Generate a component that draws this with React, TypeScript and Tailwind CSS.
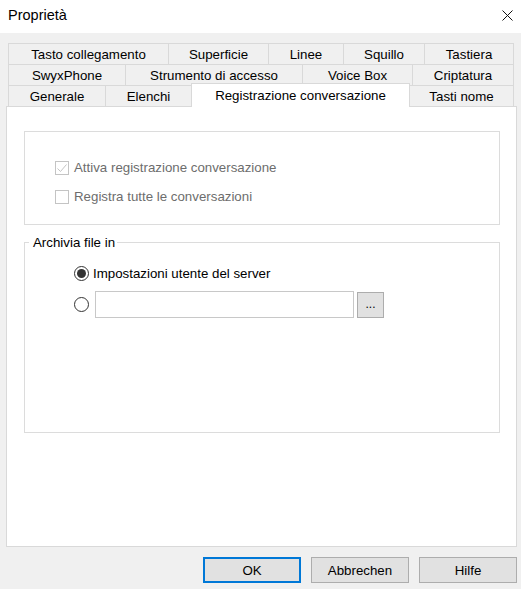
import React from "react";

type TabItem = { label: string; w: string; selected?: boolean };

const rows: TabItem[][] = [
  [
    { label: "Tasto collegamento", w: "w-[161px]" },
    { label: "Superficie", w: "w-[101px]" },
    { label: "Linee", w: "w-[76px]" },
    { label: "Squillo", w: "w-[82px]" },
    { label: "Tastiera", w: "w-[90px]" },
  ],
  [
    { label: "SwyxPhone", w: "w-[118px]" },
    { label: "Strumento di accesso", w: "w-[178px]" },
    { label: "Voice Box", w: "w-[111px]" },
    { label: "Criptatura", w: "w-[102px]" },
  ],
  [
    { label: "Generale", w: "w-[98px]" },
    { label: "Elenchi", w: "w-[87px]" },
    { label: "Registrazione conversazione", w: "w-[219px]", selected: true },
    { label: "Tasti nome", w: "w-[105px]" },
  ],
];

const Tab = ({ tab, first }: { tab: TabItem; first: boolean }) => {
  if (tab.selected)
    return (
      <div
        className={`${tab.w} -ml-px flex h-[24px] items-center justify-center border border-b-0 border-[#d9d9d9] bg-white pb-[1px]`}
      >
        {tab.label}
      </div>
    );
  return (
    <div
      className={`${tab.w} ${first ? "" : "-ml-px"} flex h-[22px] items-center justify-center border border-[#d9d9d9] bg-[#f0f0f0]`}
    >
      {tab.label}
    </div>
  );
};

const Checkbox = ({ checked, label }: { checked?: boolean; label: string }) => (
  <div className="flex h-[15px] items-center">
    <div className="flex h-[14px] w-[14px] items-center justify-center border border-[#c4c4c4] bg-white">
      {checked && (
        <svg width="12" height="12" viewBox="0 0 12 12">
          <path d="M1.5 6.5 L4.5 9.5 L10.5 2.5" fill="none" stroke="#c4c4c4" strokeWidth="1" />
        </svg>
      )}
    </div>
    <span className="ml-[5px] text-[#6d6d6d]">{label}</span>
  </div>
);

const Radio = ({ checked }: { checked?: boolean }) => (
  <div className="flex h-[15px] w-[15px] shrink-0 items-center justify-center rounded-full border border-[#333333] bg-white">
    {checked && <div className="h-[9px] w-[9px] rounded-full bg-[#333333]" />}
  </div>
);

const DialogButton = ({ label, focused }: { label: string; focused?: boolean }) => (
  <button
    className={`flex h-[26px] w-[98px] items-center justify-center bg-[#e1e1e1] ${
      focused ? "border-2 border-[#0078d7]" : "border border-[#adadad]"
    }`}
  >
    {label}
  </button>
);

export default function App() {
  return (
    <div className="flex h-[589px] w-[521px] flex-col bg-[#f0f0f0] font-['Liberation_Sans',Arial,sans-serif] text-[13.3px] leading-[15px] text-black">
      {/* title bar */}
      <div className="flex h-[33px] items-center justify-between bg-white pb-[3px] pl-[8px] pr-[8px]">
        <span className="text-[14.5px] text-[#000]">Proprietà</span>
        <svg width="11" height="11" viewBox="0 0 11 11">
          <path d="M0.5 0.5 L10.5 10.5 M10.5 0.5 L0.5 10.5" stroke="#111" strokeWidth="1" />
        </svg>
      </div>

      <div className="pt-[10px]">
        <div className="ml-[8px] w-[506px]">
          <div className="flex">
            {rows[0].map((t, i) => (
              <Tab key={t.label} tab={t} first={i === 0} />
            ))}
          </div>
          <div className="-mt-px flex">
            {rows[1].map((t, i) => (
              <Tab key={t.label} tab={t} first={i === 0} />
            ))}
          </div>
          <div className="relative z-10 -mt-[3px] flex items-end">
            {rows[2].map((t, i) => (
              <Tab key={t.label} tab={t} first={i === 0} />
            ))}
          </div>
        </div>

        {/* tab page */}
        <div className="-mt-px ml-[6px] h-[441px] w-[511px] border border-[#d9d9d9] bg-white pl-[17px] pt-[24px]">
          <div className="h-[94px] w-[476px] border border-[#dcdcdc] pl-[30px] pt-[28px]">
            <div className="flex flex-col gap-[14px]">
              <Checkbox checked label="Attiva registrazione conversazione" />
              <Checkbox label="Registra tutte le conversazioni" />
            </div>
          </div>

          <fieldset className="mt-[10px] w-[476px] border border-[#dcdcdc]">
            <legend className="ml-[4px] pl-[4px] pr-[2px] leading-[15px]">Archivia file in</legend>
            <div className="h-[182px] pl-[49px] pt-[15px]">
              <div className="flex h-[16px] items-center">
                <Radio checked />
                <span className="ml-[4px]">Impostazioni utente del server</span>
              </div>
              <div className="mt-[10px] flex items-center">
                <Radio />
                <div className="ml-[6px] h-[27px] w-[259px] border border-[#c8c8c8] bg-white" />
                <button className="ml-[3px] flex h-[26px] w-[27px] items-center justify-center border border-[#adadad] bg-[#e1e1e1] text-[12px]">
                  ...
                </button>
              </div>
            </div>
          </fieldset>
        </div>

        <div className="flex justify-end gap-[10px] pr-[4px] pt-[10px]">
          <DialogButton label="OK" focused />
          <DialogButton label="Abbrechen" />
          <DialogButton label="Hilfe" />
        </div>
      </div>
    </div>
  );
}
